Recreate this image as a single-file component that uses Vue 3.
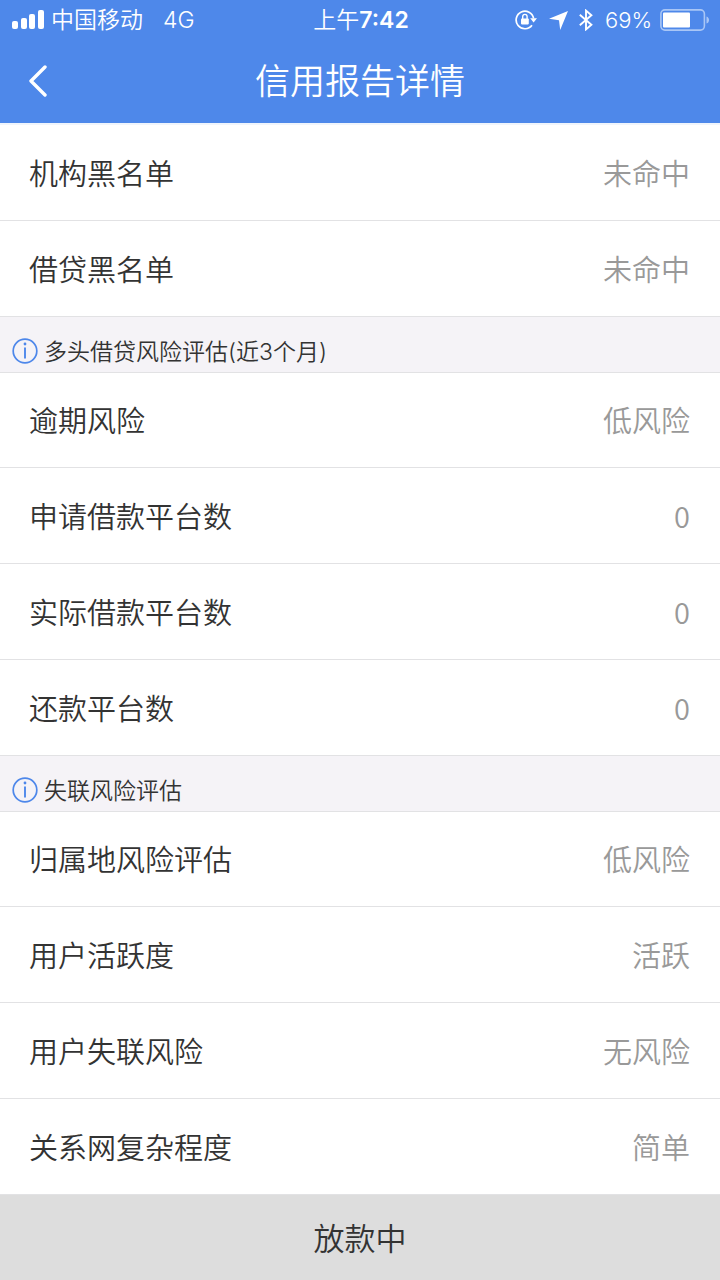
<template>
  <div class="page">
    <header class="header">
      <div class="status-bar">
        <div class="status-left">
          <svg class="signal" width="32" height="20" viewBox="0 0 32 20" fill="#fff">
            <rect x="0" y="11" width="6" height="8" rx="2" />
            <rect x="9" y="8" width="6" height="11" rx="2" />
            <rect x="17" y="4" width="6" height="15" rx="2" />
            <rect x="26" y="0" width="6" height="19" rx="2" />
          </svg>
          <span class="carrier">中国移动</span>
          <span>4G</span>
        </div>
        <div class="status-time">上午<b>7:42</b></div>
        <div class="status-right">
          <svg width="22" height="22" viewBox="0 0 22 22">
            <path d="M17 16.2 A8.8 8.8 0 1 1 18.6 9.4" fill="none" stroke="#fff" stroke-width="1.7" />
            <path d="M15.2 9.2 H22 L18.6 13.6 Z" fill="#fff" />
            <rect x="6" y="9.4" width="7.8" height="6" rx="0.8" fill="#fff" />
            <path d="M7.7 10 V7.6 a2.2 2.2 0 0 1 4.4 0 V10" fill="none" stroke="#fff" stroke-width="1.4" />
          </svg>
          <svg class="location" width="19" height="19" viewBox="0 0 19 19">
            <path d="M19 0 L11.2 19 L10 9.2 L0 7.8 Z" fill="#fff" />
          </svg>
          <svg class="bluetooth" width="14" height="22" viewBox="0 0 14 22">
            <path d="M0.8 5.8 L12.4 15.8 L7 20.4 V1.6 L12.4 6.2 L0.8 16.2" fill="none" stroke="#fff" stroke-width="1.9" />
          </svg>
          <span class="percent">69%</span>
          <svg width="50" height="22" viewBox="0 0 50 22">
            <rect x="0.9" y="0.9" width="43.5" height="20.2" rx="4" fill="none" stroke="#a9c6f6" stroke-width="1.6" />
            <rect x="3" y="3.5" width="27" height="15" rx="1" fill="#fff" />
            <path d="M46.5 7.5 c3.4 1 3.4 6 0 7 Z" fill="#a9c6f6" />
          </svg>
        </div>
      </div>
      <div class="nav-bar">
        <button class="back" type="button" aria-label="返回">
          <svg width="20" height="32" viewBox="0 0 20 32">
            <path d="M17 2 L3 16 L17 30" fill="none" stroke="#fff" stroke-width="3.4" stroke-linecap="round" stroke-linejoin="round" />
          </svg>
        </button>
        <h1 class="title">信用报告详情</h1>
      </div>
    </header>

    <main class="content">
      <section v-for="(group, index) in groups" :key="index">
        <h2 v-if="group.title" class="section-title">
          <svg width="26" height="26" viewBox="0 0 26 26">
            <circle cx="13" cy="13" r="11.8" fill="none" stroke="#4d87ea" stroke-width="1.7" />
            <circle cx="13" cy="6" r="1.4" fill="#4d87ea" />
            <path d="M13 9.4 V20.4" stroke="#4d87ea" stroke-width="1.9" />
          </svg>
          <span class="section-text">{{ group.title }}</span>
        </h2>
        <dl class="rows">
          <div v-for="item in group.items" :key="item.label" class="row">
            <dt>{{ item.label }}</dt>
            <dd>{{ item.value }}</dd>
          </div>
        </dl>
      </section>
    </main>

    <button class="submit" type="button">放款中</button>
  </div>
</template>

<script setup>
const groups = [
  {
    title: '',
    items: [
      { label: '机构黑名单', value: '未命中' },
      { label: '借贷黑名单', value: '未命中' }
    ]
  },
  {
    title: '多头借贷风险评估(近3个月)',
    items: [
      { label: '逾期风险', value: '低风险' },
      { label: '申请借款平台数', value: 0 },
      { label: '实际借款平台数', value: 0 },
      { label: '还款平台数', value: 0 }
    ]
  },
  {
    title: '失联风险评估',
    items: [
      { label: '归属地风险评估', value: '低风险' },
      { label: '用户活跃度', value: '活跃' },
      { label: '用户失联风险', value: '无风险' },
      { label: '关系网复杂程度', value: '简单' }
    ]
  }
]
</script>

<style>
body {
  margin: 0;
  background: #fff;
}
</style>

<style scoped>
.page {
  display: flex;
  flex-direction: column;
  min-height: 100vh;
  font-family: "Inter", "Noto Sans CJK SC", sans-serif;
  font-weight: 350;
  color: #333;
}

.header {
  background: #4e88ea;
  color: #fff;
  border-bottom: 2px solid #f0f5fc;
}

.status-bar {
  display: grid;
  grid-template-columns: 1fr auto 1fr;
  align-items: center;
  height: 40px;
  padding: 0 10px 0 12px;
  font-size: 23px;
  line-height: 40px;
}

.status-left,
.status-right {
  display: flex;
  align-items: center;
}

.status-right {
  justify-content: flex-end;
}

.carrier {
  margin: 0 20px 0 7px;
}

.status-time b {
  font-weight: 600;
}

.location {
  margin: 0 11px 0 12px;
}

.percent {
  margin: 0 8px 0 12px;
  font-size: 22px;
}

.nav-bar {
  display: grid;
  grid-template-columns: 76px 1fr 76px;
  align-items: center;
  height: 83px;
}

.back {
  display: flex;
  align-items: center;
  height: 83px;
  padding: 0 28px 2px;
  border: 0;
  background: none;
}

.title {
  margin: 0;
  font-size: 35px;
  font-weight: 350;
  line-height: 83px;
  text-align: center;
}

.content {
  flex: 1;
}

.section-title {
  display: flex;
  align-items: center;
  gap: 6px;
  box-sizing: border-box;
  height: 56px;
  margin: 0;
  padding: 12px 12px 0;
  background: #f5f3f7;
  border-bottom: 1px solid #e2e2e4;
  font-size: 23px;
  font-weight: 350;
}

.section-text {
  padding-bottom: 2px;
}

.rows {
  margin: 0;
}

.row {
  display: flex;
  align-items: center;
  justify-content: space-between;
  box-sizing: border-box;
  height: 96px;
  padding: 0 30px 2px 29px;
  background: #fff;
  border-bottom: 1px solid #e2e2e4;
  font-family: "Noto Sans CJK SC", sans-serif;
  font-size: 29px;
}

.section-title + .rows .row:first-child {
  height: 95px;
}

.row dd {
  margin: 0;
  color: #999;
}

.submit {
  height: 85px;
  padding: 0 0 2px;
  border: 0;
  background: #ddd;
  color: #333;
  font-family: inherit;
  font-size: 31px;
  font-weight: 350;
}
</style>
